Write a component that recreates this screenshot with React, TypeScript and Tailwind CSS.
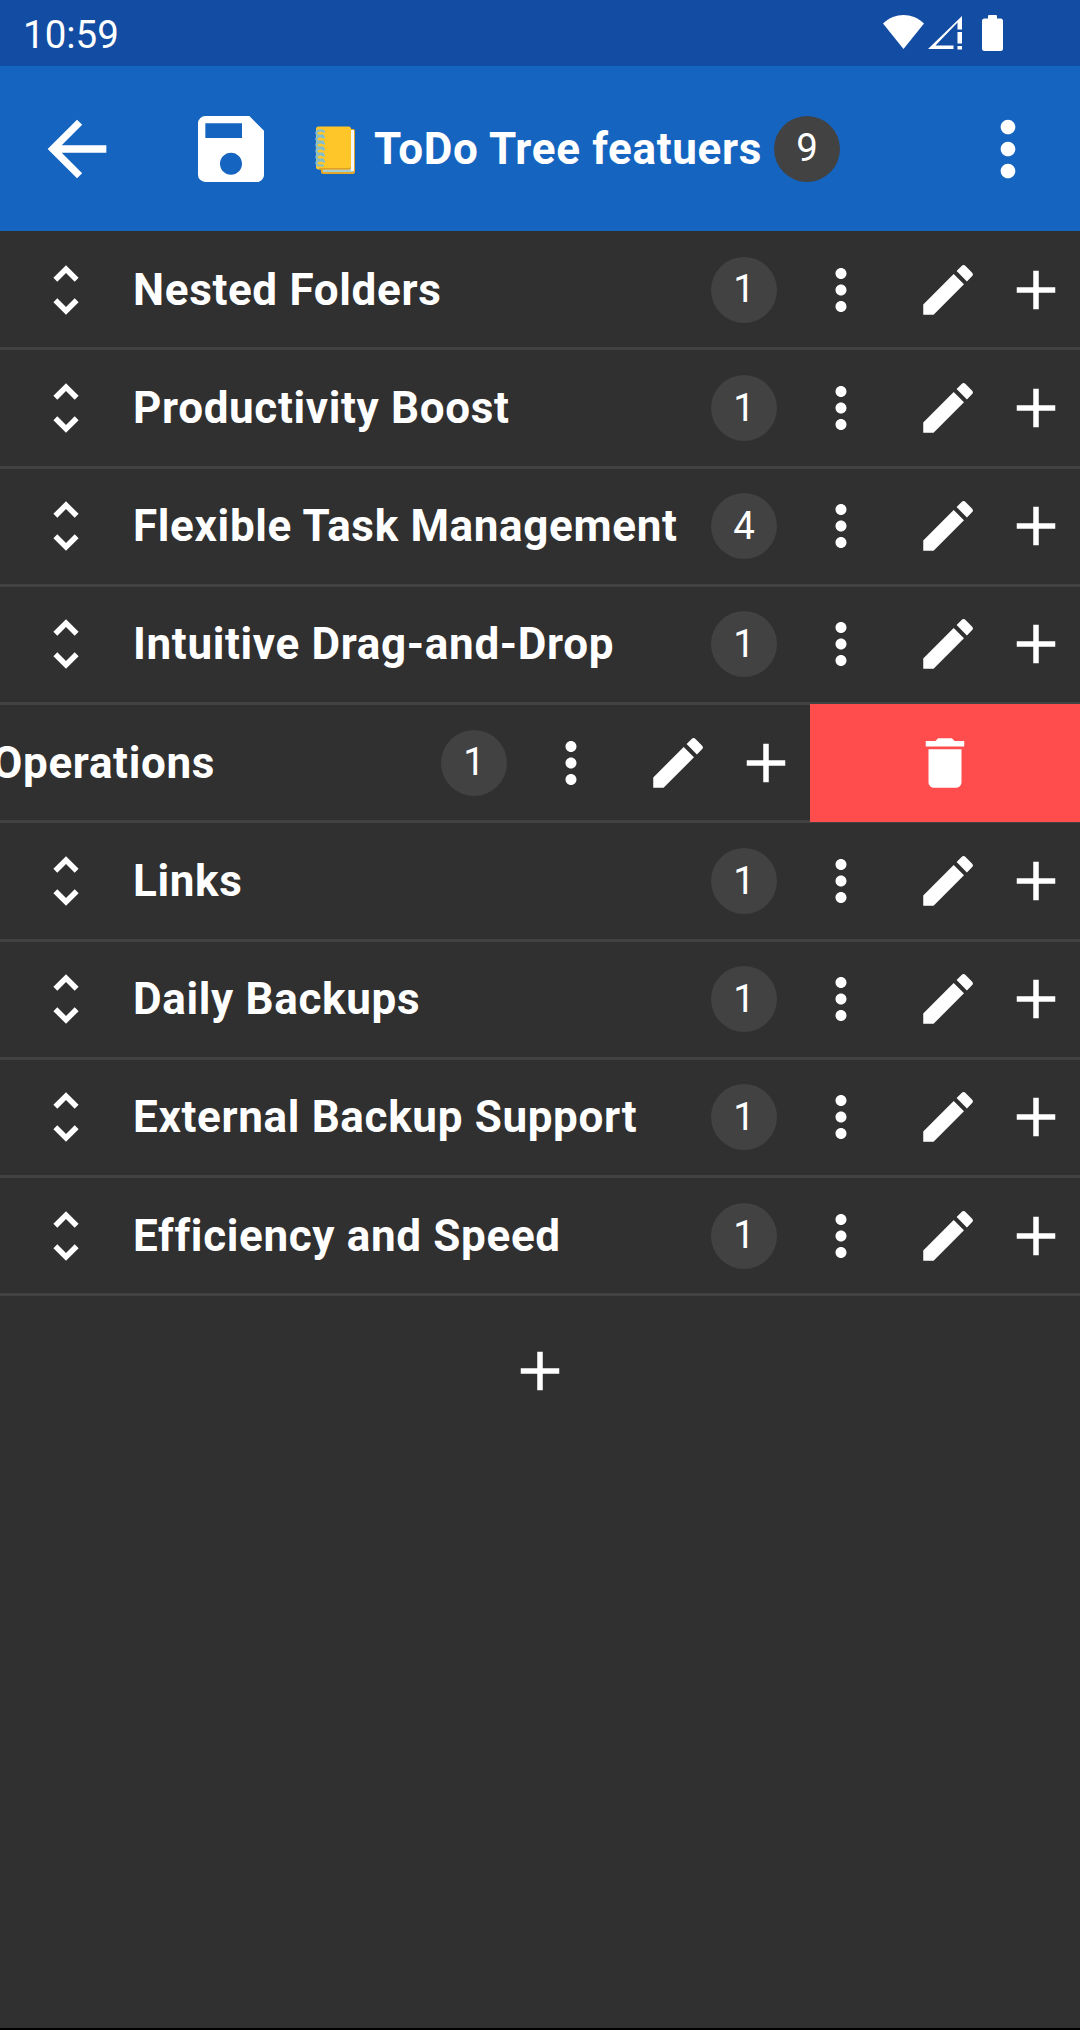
import React from 'react';
import { MdAdd, MdArrowBack, MdDelete, MdEdit, MdMoreVert, MdSave, MdUnfoldMore } from 'react-icons/md';

type Task = { title: string; count: number; swiped?: boolean };

const tasks: Task[] = [
  { title: 'Nested Folders', count: 1 },
  { title: 'Productivity Boost', count: 1 },
  { title: 'Flexible Task Management', count: 4 },
  { title: 'Intuitive Drag-and-Drop', count: 1 },
  { title: 'Operations', count: 1, swiped: true },
  { title: 'Links', count: 1 },
  { title: 'Daily Backups', count: 1 },
  { title: 'External Backup Support', count: 1 },
  { title: 'Efficiency and Speed', count: 1 },
];

const CountBadge: React.FC<{ count: number }> = ({ count }) => (
  <div className="w-[66px] h-[66px] rounded-full bg-[#424242] flex items-center justify-center text-[38.5px] leading-none text-white shrink-0">
    {count}
  </div>
);

const StatusIcons: React.FC = () => (
  <div className="flex items-start gap-0 mr-[77px] mt-[15px]">
    <svg width="41" height="34" viewBox="0 0 41 34" fill="white">
      <path d="M0 8.5C12 -2.8 29 -2.8 41 8.5L20.5 34Z" />
    </svg>
    <svg width="34" height="34" viewBox="0 0 34 34" fill="white" className="ml-[4px] mt-[1px]">
      <path d="M0 33L34 0V13.5H29.5V6.5L7.5 29.5H25.5V33Z" />
      <rect x="29.5" y="16" width="4.5" height="11.5" />
      <rect x="29.5" y="30" width="4.5" height="3.5" />
    </svg>
    <svg width="21" height="36" viewBox="0 0 21 36" fill="white" className="ml-[20px]">
      <rect x="0" y="3.5" width="21" height="32.5" rx="2.5" />
      <rect x="6" y="0" width="9" height="5" rx="1" />
    </svg>
  </div>
);

const NotebookEmoji: React.FC = () => (
  <svg width="60" height="66" viewBox="0 0 60 66" className="shrink-0">
    <rect x="16" y="13" width="34" height="45" rx="2" fill="#e3a72a" />
    <rect x="18" y="14" width="30" height="42" fill="#a5cfd8" />
    <rect x="46" y="14" width="3" height="41" fill="#f7f7f7" />
    <rect x="11" y="10.5" width="35" height="43" rx="2.5" fill="#ffc629" />
    <path d="M14 53.5H43.5C45 53.5 46 52.5 46 51V50C46 51 45 52 43.5 52H14Z" fill="#e09f25" />
    <g fill="none" stroke="#84bfd0" strokeWidth="2.2" strokeLinecap="round">
      <path d="M19 15.5C13 12.5 9 17 13 19.5H18" />
      <path d="M19 21.5C13 18.5 9 23 13 25.5H18" />
      <path d="M19 27.5C13 24.5 9 29 13 31.5H18" />
      <path d="M19 33.5C13 30.5 9 35 13 37.5H18" />
      <path d="M19 39.5C13 36.5 9 41 13 43.5H18" />
      <path d="M19 45.5C13 42.5 9 47 13 49.5H18" />
    </g>
  </svg>
);

const TaskRowContent: React.FC<{ task: Task }> = ({ task }) => (
  <div className="w-[1080px] shrink-0 flex items-center text-white">
    <MdUnfoldMore size={66} className="ml-[33px] shrink-0" />
    <span className={`${task.swiped ? 'ml-[163px]' : 'ml-[34px]'} flex-1 text-[44px] font-bold leading-none tracking-[0.66px] whitespace-nowrap`}>
      {task.title}
    </span>
    <CountBadge count={task.count} />
    <MdMoreVert size={66} className="ml-[31px] shrink-0" />
    <MdEdit size={66} className="ml-[41px] shrink-0" />
    <MdAdd size={66} className="ml-[22px] mr-[11px] shrink-0" />
  </div>
);

const TaskRow: React.FC<{ task: Task }> = ({ task }) => (
  <div className="h-[118.25px] border-b-[3px] border-[#424242] overflow-x-clip flex">
    {task.swiped ? (
      <div className="flex w-[1350px] -ml-[270px] shrink-0">
        <TaskRowContent task={task} />
        <div className="w-[270px] -mt-px -mb-[2px] bg-[#ff4d4d] flex items-center justify-center text-white">
          <MdDelete size={66} />
        </div>
      </div>
    ) : (
      <TaskRowContent task={task} />
    )}
  </div>
);

export default function App() {
  return (
    <div className="w-[1080px] h-[2030px] flex flex-col bg-[#303030] font-['Roboto',sans-serif] overflow-hidden">
      <div className="h-[66px] bg-[#134ca3] flex justify-between text-white shrink-0">
        <span className="ml-[23px] mt-[13px] text-[38.5px] leading-[44px]">10:59</span>
        <StatusIcons />
      </div>

      <div className="h-[165px] bg-[#1565c0] flex items-center text-white shrink-0">
        <MdArrowBack size={88} className="ml-[33px] shrink-0" />
        <MdSave size={88} className="ml-[66px] shrink-0" />
        <div className="ml-[30px]">
          <NotebookEmoji />
        </div>
        <span className="ml-[9px] text-[44px] font-bold leading-none tracking-[0.66px] whitespace-nowrap">ToDo Tree featuers</span>
        <div className="ml-[12px]">
          <CountBadge count={9} />
        </div>
        <MdMoreVert size={88} className="ml-auto mr-[28px] shrink-0" />
      </div>

      <div className="flex-1 pt-px">
        {tasks.map((task) => (
          <TaskRow key={task.title} task={task} />
        ))}
        <div className="flex justify-center pt-[42px]">
          <MdAdd size={66} className="text-white" />
        </div>
      </div>

      <div className="h-[2px] bg-black shrink-0" />
    </div>
  );
}
